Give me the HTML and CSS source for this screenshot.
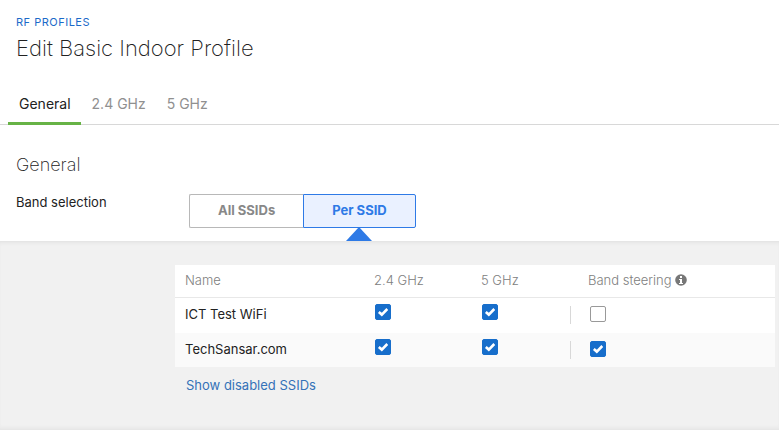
FILE: index.html
```html
<!DOCTYPE html>
<html lang="en">
<head>
<meta charset="utf-8">
<title>Edit Basic Indoor Profile</title>
<link rel="stylesheet" href="styles.css">
</head>
<body>
<header class="page-header">
  <a class="breadcrumb" href="#">RF PROFILES</a>
  <h1 class="page-title">Edit Basic Indoor Profile</h1>
</header>
<nav class="tabs">
  <a class="tab tab-active" href="#">General</a>
  <a class="tab" href="#">2.4 GHz</a>
  <a class="tab" href="#">5 GHz</a>
</nav>
<main>
  <section class="settings">
    <h2 class="section-title">General</h2>
    <div class="field">
      <span class="field-label" id="band-label">Band selection</span>
      <div class="segmented" role="group" aria-labelledby="band-label">
        <button class="segment" type="button">All SSIDs</button>
        <button class="segment segment-active" type="button">Per SSID</button>
      </div>
    </div>
  </section>
  <section class="panel">
    <table class="ssids">
      <thead>
        <tr>
          <th class="col-name">Name</th>
          <th class="col-band">2.4 GHz</th>
          <th class="col-band-last">5 GHz</th>
          <th class="col-steering">Band steering
            <svg class="info" viewBox="0 0 12 12" aria-hidden="true"><circle cx="6" cy="6" r="5.8" fill="#777"/><path d="M5 2h2v2H5zM4 5h3v4h1v1H4V9h1V6H4z" fill="#fff"/></svg>
          </th>
        </tr>
      </thead>
      <tbody>
        <tr>
          <td>ICT Test WiFi</td>
          <td><input class="check" type="checkbox" aria-label="ICT Test WiFi 2.4 GHz" checked></td>
          <td><input class="check" type="checkbox" aria-label="ICT Test WiFi 5 GHz" checked></td>
          <td class="steering"><div class="steering-box"><input class="check" type="checkbox" aria-label="ICT Test WiFi band steering"></div></td>
        </tr>
        <tr>
          <td>TechSansar.com</td>
          <td><input class="check" type="checkbox" aria-label="TechSansar.com 2.4 GHz" checked></td>
          <td><input class="check" type="checkbox" aria-label="TechSansar.com 5 GHz" checked></td>
          <td class="steering"><div class="steering-box"><input class="check" type="checkbox" aria-label="TechSansar.com band steering" checked></div></td>
        </tr>
      </tbody>
    </table>
    <a class="show-link" href="#">Show disabled SSIDs</a>
  </section>
</main>
</body>
</html>
```
FILE: styles.css
```css
* { box-sizing: border-box; }
body {
  margin: 0;
  background: #fff;
  color: #222;
  font: 13px/20px Inter, "Liberation Sans", sans-serif;
}
a { text-decoration: none; }
.page-header { padding: 12px 16px 0; }
.breadcrumb {
  display: block;
  color: #1b6ac9;
  font-size: 11px;
  letter-spacing: 0.5px;
}
.page-title {
  margin: 0;
  font-size: 22px;
  font-weight: 200;
  line-height: 32px;
}
.tabs {
  display: flex;
  margin-top: 20px;
  padding-left: 8px;
  border-bottom: 1px solid #d8d8d8;
}
.tab {
  height: 40px;
  padding: 0 10px 0 11px;
  color: #909090;
  font-size: 14px;
  line-height: 40px;
}
.tab-active {
  height: 41px;
  margin-bottom: -1px;
  border-bottom: 3px solid #67b346;
  color: #222;
}
.settings { padding: 28px 16px 13px; }
.section-title {
  margin: 0;
  font-size: 18px;
  font-weight: 200;
  line-height: 24px;
}
.field {
  display: flex;
  align-items: flex-start;
  margin-top: 15px;
}
.field-label { width: 173px; }
.segmented { display: flex; margin-top: 2px; }
.segment {
  position: relative;
  height: 34px;
  padding: 0 28px 2px;
  border: 1px solid #b8b8b8;
  border-right: 0;
  border-radius: 2px 0 0 2px;
  background: #fff;
  color: #888;
  font: 700 13px/20px Inter, "Liberation Sans", sans-serif;
}
.segment-active {
  border: 1px solid #2e7ae6;
  border-radius: 0 2px 2px 0;
  background: #eaf1ff;
  color: #2e7ae6;
}
.segment-active::after {
  content: "";
  position: absolute;
  top: 100%;
  left: 50%;
  margin-left: -13px;
  border: 13px solid transparent;
  border-top: 0;
  border-bottom: 14px solid #2e7ae6;
}
.panel {
  padding: 24px 4px 35px 175px;
  background: #f1f1f1;
  box-shadow: inset 0 4px 4px -3px #dedede, inset 0 -4px 4px -3px #e0e0e0;
}
.ssids {
  width: 100%;
  table-layout: fixed;
  border-collapse: separate;
  border-spacing: 0;
  background: #fff;
}
.ssids th {
  height: 33px;
  padding: 0 10px 3px;
  border-bottom: 1px solid #e8e8e8;
  color: #808080;
  font-weight: 300;
  text-align: left;
}
.ssids td { height: 35px; padding: 6px 10px 0; vertical-align: top; }
.ssids tbody tr:last-child { background: #fafafa; }
.ssids tbody tr:last-child td { height: 34px; }
.col-name { width: 189px; }
.col-band { width: 107px; }
.col-band-last { width: 99px; }
.ssids .col-steering { padding-left: 18px; }
.info { width: 12px; height: 12px; vertical-align: -1px; }
.check {
  display: block;
  appearance: none;
  width: 16px;
  height: 16px;
  margin: 0 1px;
  border: 1px solid #999;
  border-radius: 2px;
  background: #fff;
}
.check:checked {
  border-color: #176ecb;
  background: #176ecb url("data:image/svg+xml,%3Csvg xmlns='http://www.w3.org/2000/svg' viewBox='0 0 14 14'%3E%3Cpath d='M2.8 7 5.8 9.6 11.3 4' fill='none' stroke='white' stroke-width='2.6'/%3E%3C/svg%3E") center / 14px 14px;
}
.ssids .steering { padding: 8px 0 0; }
.steering-box {
  height: 18px;
  padding-left: 18px;
  border-left: 1px solid #d8d8d8;
}
.show-link {
  display: block;
  margin-top: 8px;
  padding-left: 11px;
  color: #3572b8;
}
```
